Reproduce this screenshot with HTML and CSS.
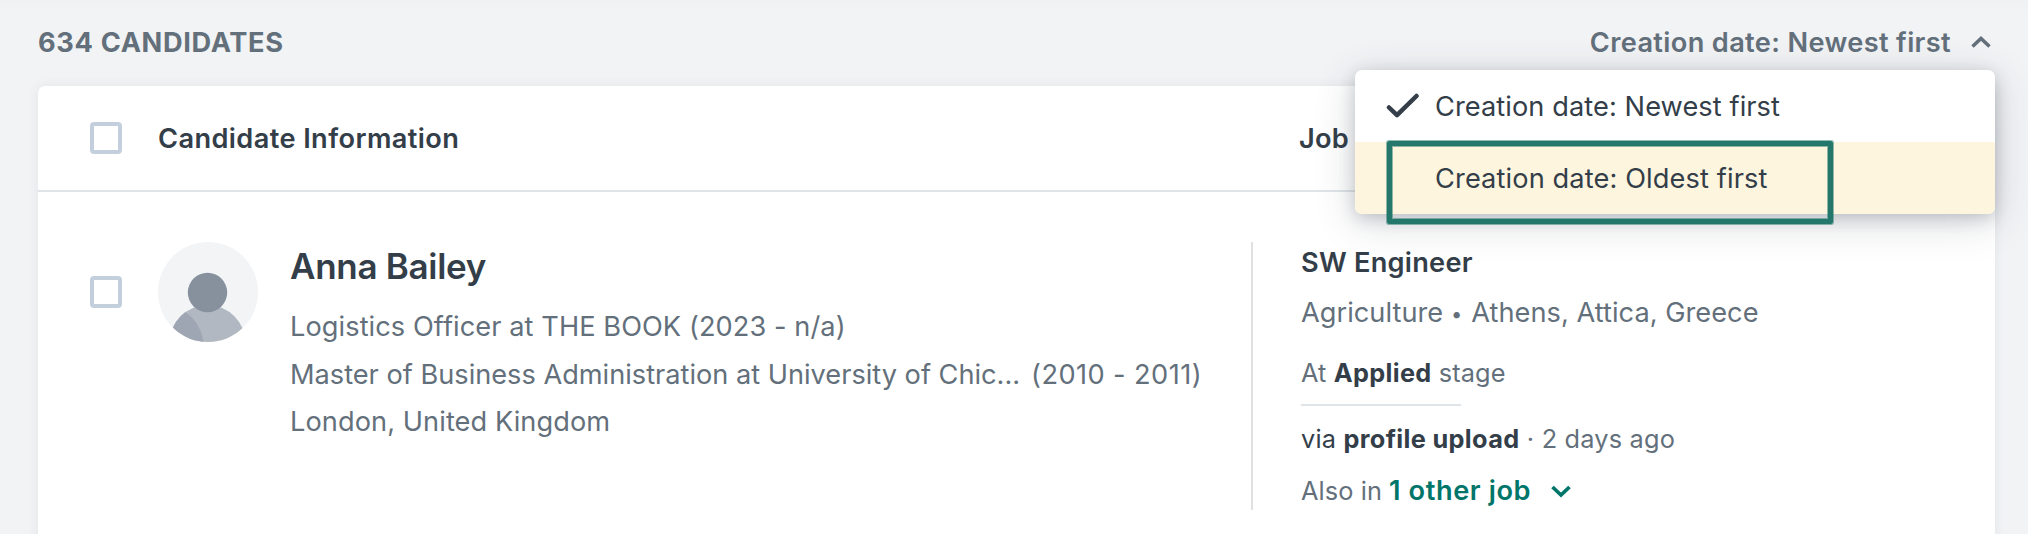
FILE: index.html
```html
<!DOCTYPE html>
<html lang="en">
<head>
<meta charset="utf-8">
<title>Candidates</title>
<link rel="stylesheet" href="styles.css">
</head>
<body>
<header class="toolbar">
  <h1 class="count">634 CANDIDATES</h1>
  <div class="sort">
    <button class="sort-toggle"><span>Creation date: Newest first</span>
      <svg class="chevron" width="20" height="14" viewBox="0 0 20 14"><path d="M1.500 10.500 10 2.500l8.500 8"/></svg>
    </button>
    <div class="menu">
      <div class="option option-current"><svg class="check" width="34" height="26" viewBox="0 0 34 26"><path d="M3 14.500 11 22.200 30.500 3"/></svg><span>Creation date: Newest first</span></div>
      <div class="option option-active"><span>Creation date: Oldest first</span></div>
      <div class="highlight"></div>
    </div>
  </div>
</header>
<main class="card">
  <div class="head">
    <span class="checkbox"></span>
    <span class="head-info">Candidate Information</span>
    <span class="head-job">Job</span>
  </div>
  <div class="row">
    <span class="checkbox row-check"></span>
    <svg class="avatar" width="100" height="100" viewBox="0 0 100 100">
      <defs><clipPath id="disc"><circle cx="50" cy="50" r="50"/></clipPath><clipPath id="body"><circle cx="49.500" cy="101" r="38"/></clipPath></defs>
      <g clip-path="url(#disc)">
        <rect width="100" height="100" fill="#f2f4f6"/>
        <circle cx="49.500" cy="101" r="38" fill="#b1b8c1"/>
        <circle cx="5" cy="104" r="40.500" fill="#9fa6b3" clip-path="url(#body)"/>
        <circle cx="49.500" cy="50.500" r="19.700" fill="#87919d"/>
      </g>
    </svg>
    <div class="profile">
      <h2 class="name">Anna Bailey</h2>
      <p class="line">Logistics Officer at THE BOOK (2023 - n/a)</p>
      <p class="line line-education">Master of Business Administration at University of Chic...<span class="years">(2010 - 2011)</span></p>
      <p class="line">London, United Kingdom</p>
    </div>
    <div class="job">
      <p class="job-title">SW Engineer</p>
      <p class="place">Agriculture <i class="dot">•</i> Athens, Attica, Greece</p>
      <p class="stage">At <b>Applied</b> stage</p>
      <hr class="rule">
      <p class="source"><em>via <b>profile upload</b></em> · 2 days ago</p>
      <p class="also"><span>Also in</span> <a class="other">1 other job</a>
        <svg class="chevron chevron-green" width="20" height="14" viewBox="0 0 20 14"><path d="M1.500 3 10 11l8.500-8"/></svg></p>
    </div>
  </div>
</main>
</body>
</html>
```
FILE: styles.css
```css
* { box-sizing: border-box; }
body { margin: 0; height: 534px; overflow: hidden; background: linear-gradient(#eff1f3 0, #f2f3f5 12px); font: 400 27.200px/40px Inter, "Liberation Sans", sans-serif; color: #333e49; }
h1, h2, p { margin: 0; font: inherit; }
b { font-weight: 650; letter-spacing: .35px; color: #333e49; }
em { font-style: normal; color: #333e49; }
.toolbar { height: 86px; padding: 0 33px 0 38px; display: flex; justify-content: space-between; align-items: center; color: #63707b; }
.count { font-weight: 650; letter-spacing: .65px; }
.sort { position: relative; height: 86px; display: flex; }
.sort-toggle { border: 0; padding: 0 4px 0 0; background: none; font: inherit; font-weight: 560; letter-spacing: .35px; color: inherit; display: flex; align-items: center; gap: 20px; }
.chevron { display: block; fill: none; stroke: #63707b; stroke-width: 3.500; }
.chevron-green { stroke: #00756a; stroke-width: 3.700; }
.menu { position: absolute; top: 70px; right: 0; width: 640px; height: 144px; border-radius: 7px; background: #fff; box-shadow: 0 8px 40px rgba(51,62,73,.2), 0 4px 16px rgba(51,62,73,.22); color: #333e49; z-index: 2; }
.option { height: 72px; padding: 2px 0 0 80px; display: flex; align-items: center; position: relative; letter-spacing: .12px; }
.option-current { letter-spacing: .08px; }
.option-active { background: #fef5df; border-radius: 0 0 7px 7px; }
.check { position: absolute; left: 31px; top: 23px; fill: none; stroke: #333e49; stroke-width: 4.500; stroke-linecap: round; stroke-linejoin: round; }
.highlight { position: absolute; left: 32px; top: 71px; width: 446px; height: 83px; border: 5px solid #23776b; border-radius: 2px; box-shadow: 0 0 0 1px rgba(35,119,107,.5), inset 0 0 0 1px rgba(35,119,107,.5); }
.card { margin: 0 33px 0 38px; height: 460px; background: #fff; border-radius: 7px 7px 0 0; box-shadow: 0 0 12px rgba(51,62,73,.08); }
.head { height: 106px; border-bottom: 2px solid #dfe4e9; padding-left: 52px; display: flex; align-items: center; font-weight: 580; }
.checkbox { flex: none; width: 32px; height: 32px; border: 4px solid #c4cfde; border-radius: 4px; }
.head-info { width: 1141px; margin-left: 36px; padding-top: 2px; letter-spacing: .4px; }
.head-job { padding-top: 2px; letter-spacing: .2px; }
.row { display: flex; padding: 50px 0 0 52px; }
.row-check { margin-top: 34px; }
.avatar { flex: none; margin-left: 36px; }
.profile { width: 961px; height: 268px; margin-left: 32px; color: #63707b; white-space: nowrap; }
.name { font-size: 35px; line-height: 48px; font-weight: 560; letter-spacing: -.3px; color: #333e49; margin-bottom: 13px; }
.line { line-height: 47.500px; letter-spacing: .07px; }
.line-education { letter-spacing: -.01px; }
.years { margin-left: 11px; letter-spacing: .42px; }
.job { height: 268px; border-left: 2px solid #dfe1e3; padding-left: 48px; color: #63707b; white-space: nowrap; }
.job-title { font-weight: 580; letter-spacing: .25px; color: #333e49; margin-top: 1px; }
.place { margin-top: 10px; letter-spacing: .03px; }
.dot { font-style: normal; font-size: 20px; letter-spacing: 1.500px; vertical-align: 1px; line-height: 1; }
.stage { margin-top: 20px; font-size: 25.300px; letter-spacing: .1px; }
.rule { width: 160px; height: 2px; border: 0; margin: 11px 0 13px; background: #dfe4e9; }
.source { font-size: 25.300px; letter-spacing: .2px; }
.also { margin-top: 12px; display: flex; align-items: center; font-size: 25.300px; letter-spacing: .1px; }
.other { font-size: 27.200px; font-weight: 600; letter-spacing: .6px; color: #00756a; margin: 0 20px 0 7px; }
```
